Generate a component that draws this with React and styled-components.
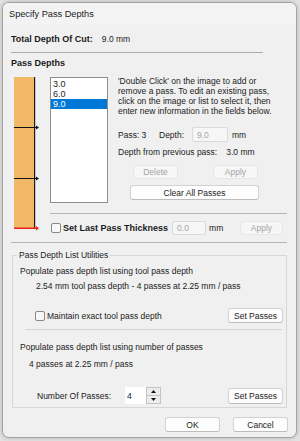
import React from 'react';
import styled, { createGlobalStyle } from 'styled-components';

const GlobalStyle = createGlobalStyle`
  html, body {
    margin: 0;
    padding: 0;
  }
  body {
    width: 300px;
    height: 441px;
    overflow: hidden;
    background: #e2e2e2;
    font-family: "Liberation Sans", Arial, sans-serif;
    font-size: 8.5px;
    color: #1b1b1b;
  }
`;

const Dialog = styled.div`
  margin: 2px 0 0 2px;
  width: 293px;
  height: 434px;
  border: 1px solid #a3a3a3;
  border-radius: 7px;
  background: #f0f0f0;
  box-shadow: 0 0 4px rgba(0, 0, 0, 0.22);
  display: flex;
  flex-direction: column;
  overflow: hidden;
`;

const TitleBar = styled.div`
  height: 22px;
  display: flex;
  align-items: center;
  padding-left: 6px;
  font-size: 9.2px;
  background: #f3f3f3;
`;

const Body = styled.div`
  flex: 1;
  display: flex;
  flex-direction: column;
  padding: 0 9px 0 8px;
`;

const TotalRow = styled.div`
  margin-top: 8px;
  display: flex;
  gap: 9px;
  line-height: 12px;
`;

const Strong = styled.span`
  font-weight: bold;
  font-size: 9px;
`;

const Rule = styled.div`
  height: 1px;
  flex-shrink: 0;
  background: ${p => p.$color || '#acacac'};
  margin-top: ${p => p.$top || 0}px;
  margin-left: ${p => p.$left || 0}px;
  margin-right: ${p => p.$right || 0}px;
  width: ${p => (p.$width ? `${p.$width}px` : 'auto')};
`;

const Heading = styled.div`
  margin-top: 4px;
  line-height: 12px;
  font-weight: bold;
  font-size: 9px;
`;

const Main = styled.div`
  margin-top: 8px;
  display: flex;
`;

const BarSvg = styled.svg`
  margin-left: 3px;
  flex-shrink: 0;
  display: block;
`;

const RightCol = styled.div`
  margin-left: 10px;
  flex: 1;
  display: flex;
  flex-direction: column;
`;

const TopRow = styled.div`
  display: flex;
`;

const ListBox = styled.div`
  box-sizing: border-box;
  width: 58px;
  height: 126px;
  flex-shrink: 0;
  border: 1px solid #8e8e8e;
  background: #fff;
  padding-top: 1px;
`;

const ListItem = styled.div`
  height: 10px;
  line-height: 10px;
  padding-left: 2px;
  font-size: 9px;
  background: ${p => (p.$selected ? '#0078d7' : 'transparent')};
  color: ${p => (p.$selected ? '#fff' : '#1b1b1b')};
`;

const Info = styled.div`
  margin-left: 10px;
  display: flex;
  flex-direction: column;
`;

const Instructions = styled.div`
  margin-top: -1px;
  line-height: 10px;
  white-space: nowrap;
`;

const PassRow = styled.div`
  margin-top: 11px;
  height: 15px;
  display: flex;
  align-items: center;
`;

const Label = styled.span`
  width: ${p => (p.$w ? `${p.$w}px` : 'auto')};
  margin-left: ${p => p.$left || 0}px;
  flex-shrink: 0;
  white-space: nowrap;
  font-weight: ${p => (p.$bold ? 'bold' : 'normal')};
  font-size: ${p => (p.$bold ? '9px' : '8.5px')};
`;

const Field = styled.div`
  box-sizing: border-box;
  width: ${p => p.$w}px;
  height: ${p => p.$h}px;
  margin-left: ${p => p.$left || 0}px;
  flex-shrink: 0;
  display: flex;
  align-items: center;
  padding-left: 4px;
  border: 1px solid #dadada;
  border-radius: 2px;
  background: #f6f6f6;
  color: #a6a6a6;
`;

const PrevRow = styled.div`
  margin-top: 5px;
  line-height: 10px;
  display: flex;
  gap: 9px;
`;

const ButtonRow = styled.div`
  margin-top: 8px;
  display: flex;
  gap: 35px;
  padding-left: 15px;
`;

const Button = styled.button`
  box-sizing: border-box;
  width: ${p => p.$w}px;
  height: ${p => p.$h || 15}px;
  margin-left: ${p => (p.$auto ? 'auto' : `${p.$left || 0}px`)};
  margin-right: ${p => p.$right || 0}px;
  margin-top: ${p => p.$top || 0}px;
  flex-shrink: 0;
  padding: 0;
  font-family: inherit;
  font-size: 8.5px;
  color: ${p => (p.disabled ? '#a4a4a4' : '#1b1b1b')};
  background: ${p => (p.disabled ? '#f6f6f6' : '#fdfdfd')};
  border: 1px solid ${p => (p.disabled ? '#e7e7e7' : '#d2d2d2')};
  border-bottom-color: ${p => (p.disabled ? '#e7e7e7' : '#bcbcbc')};
  border-radius: 3px;
`;

const CheckRow = styled.div`
  margin-top: ${p => p.$top}px;
  padding-left: ${p => p.$pad || 0}px;
  height: 15px;
  display: flex;
  align-items: center;
`;

const CheckBox = styled.span`
  box-sizing: border-box;
  width: 10px;
  height: 10px;
  flex-shrink: 0;
  border: 1px solid #8a8a8a;
  border-radius: 2px;
  background: #f7f7f7;
`;

const Group = styled.fieldset`
  margin: 6px 0 0 1px;
  padding: 0 3px 3px 0;
  min-width: 0;
  border: 1px solid #d7d7d7;
  display: flex;
  flex-direction: column;
`;

const Legend = styled.legend`
  margin-left: 4px;
  padding: 0 2px;
  line-height: 12px;
  font-size: 8.5px;
`;

const Line = styled.div`
  margin-top: ${p => p.$top}px;
  padding-left: ${p => p.$pad}px;
  line-height: 12px;
  white-space: nowrap;
`;

const NumRow = styled.div`
  margin-top: 17px;
  padding-left: 24px;
  height: 17px;
  display: flex;
  align-items: center;
`;

const Spinner = styled.div`
  display: flex;
  height: 17px;
`;

const SpinInput = styled.div`
  box-sizing: border-box;
  width: 21px;
  height: 17px;
  padding-left: 2px;
  display: flex;
  align-items: center;
  background: #fff;
  color: #14213d;
`;

const SpinButtons = styled.div`
  box-sizing: border-box;
  width: 15px;
  height: 17px;
  display: flex;
  flex-direction: column;
  border: 1px solid #c4c4c4;
  background: #c4c4c4;
  gap: 1px;
`;

const SpinButton = styled.div`
  flex: 1;
  display: flex;
  align-items: center;
  justify-content: center;
  background: #ececec;
`;

const Footer = styled.div`
  margin-top: 9px;
  display: flex;
  justify-content: flex-end;
  gap: 13px;
  margin-right: -1px;
`;

const Arrow = ({ up }) => (
  <svg width="5" height="3" viewBox="0 0 5 3">
    <polygon points={up ? '0,3 5,3 2.5,0' : '0,0 5,0 2.5,3'} fill="#111" />
  </svg>
);

const PassBar = () => (
  <BarSvg width="26" height="154" viewBox="0 0 26 154">
    <rect x="0" y="0" width="20" height="152" fill="#f1b867" />
    <rect x="20" y="0" width="1.2" height="152" fill="#1c1c1c" />
    <rect x="0" y="50" width="23" height="1" fill="#111" />
    <polygon points="22,48.5 25,50.5 22,52.5" fill="#111" />
    <rect x="0" y="101" width="23" height="1" fill="#111" />
    <polygon points="22,99.5 25,101.5 22,103.5" fill="#111" />
    <rect x="0" y="150.5" width="23" height="1.5" fill="#e8231c" />
    <polygon points="22,149 25,151.2 22,153.4" fill="#e8231c" />
  </BarSvg>
);

export default function App() {
  const passes = ['3.0', '6.0', '9.0'];
  return (
    <>
      <GlobalStyle />
      <Dialog>
        <TitleBar>Specify Pass Depths</TitleBar>
        <Body>
          <TotalRow>
            <Strong>Total Depth Of Cut:</Strong>
            <span>9.0 mm</span>
          </TotalRow>
          <Rule $top={7} $width={252} />
          <Heading>Pass Depths</Heading>
          <Main>
            <PassBar />
            <RightCol>
              <TopRow>
                <ListBox>
                  {passes.map((p, i) => (
                    <ListItem key={p} $selected={i === passes.length - 1}>{p}</ListItem>
                  ))}
                </ListBox>
                <Info>
                  <Instructions>
                    'Double Click' on the image to add or<br />
                    remove a pass. To edit an existing pass,<br />
                    click on the image or list to select it, then<br />
                    enter new information in the fields below.
                  </Instructions>
                  <PassRow>
                    <Label $w={41}>Pass: 3</Label>
                    <Label $w={33}>Depth:</Label>
                    <Field $w={36} $h={15}>9.0</Field>
                    <Label $left={4}>mm</Label>
                  </PassRow>
                  <PrevRow>
                    <span>Depth from previous pass:</span>
                    <span>3.0 mm</span>
                  </PrevRow>
                  <ButtonRow>
                    <Button $w={45} $h={14} disabled>Delete</Button>
                    <Button $w={45} $h={14} disabled>Apply</Button>
                  </ButtonRow>
                  <Button $w={129} $h={15} $left={12} $top={6}>Clear All Passes</Button>
                </Info>
              </TopRow>
              <Rule $top={10} $color="#b4b4b4" />
              <CheckRow $top={6} $pad={1}>
                <CheckBox />
                <Label $bold $left={2}>Set Last Pass Thickness</Label>
                <Field $w={34} $h={14} $left={4}>0.0</Field>
                <Label $left={3}>mm</Label>
                <Button $w={43} $h={14} $auto $right={4} disabled>Apply</Button>
              </CheckRow>
            </RightCol>
          </Main>
          <Rule $top={7} $color="#b4b4b4" />
          <Group>
            <Legend>Pass Depth List Utilities</Legend>
            <Line $top={4} $pad={7}>Populate pass depth list using tool pass depth</Line>
            <Line $top={3} $pad={23}>2.54 mm tool pass depth - 4 passes at 2.25 mm / pass</Line>
            <CheckRow $top={16} $pad={22}>
              <CheckBox />
              <Label $left={2}>Maintain exact tool pass depth</Label>
              <Button $w={55} $h={15} $auto>Set Passes</Button>
            </CheckRow>
            <Rule $top={6} $left={12} $right={1} $color="#d5d5d5" />
            <Line $top={11} $pad={7}>Populate pass depth list using number of passes</Line>
            <Line $top={5} $pad={16}>4 passes at 2.25 mm / pass</Line>
            <NumRow>
              <Label $w={88}>Number Of Passes:</Label>
              <Spinner>
                <SpinInput>4</SpinInput>
                <SpinButtons>
                  <SpinButton><Arrow up /></SpinButton>
                  <SpinButton><Arrow /></SpinButton>
                </SpinButtons>
              </Spinner>
              <Button $w={55} $h={16} $auto>Set Passes</Button>
            </NumRow>
          </Group>
          <Footer>
            <Button $w={55} $h={15}>OK</Button>
            <Button $w={55} $h={15}>Cancel</Button>
          </Footer>
        </Body>
      </Dialog>
    </>
  );
}
